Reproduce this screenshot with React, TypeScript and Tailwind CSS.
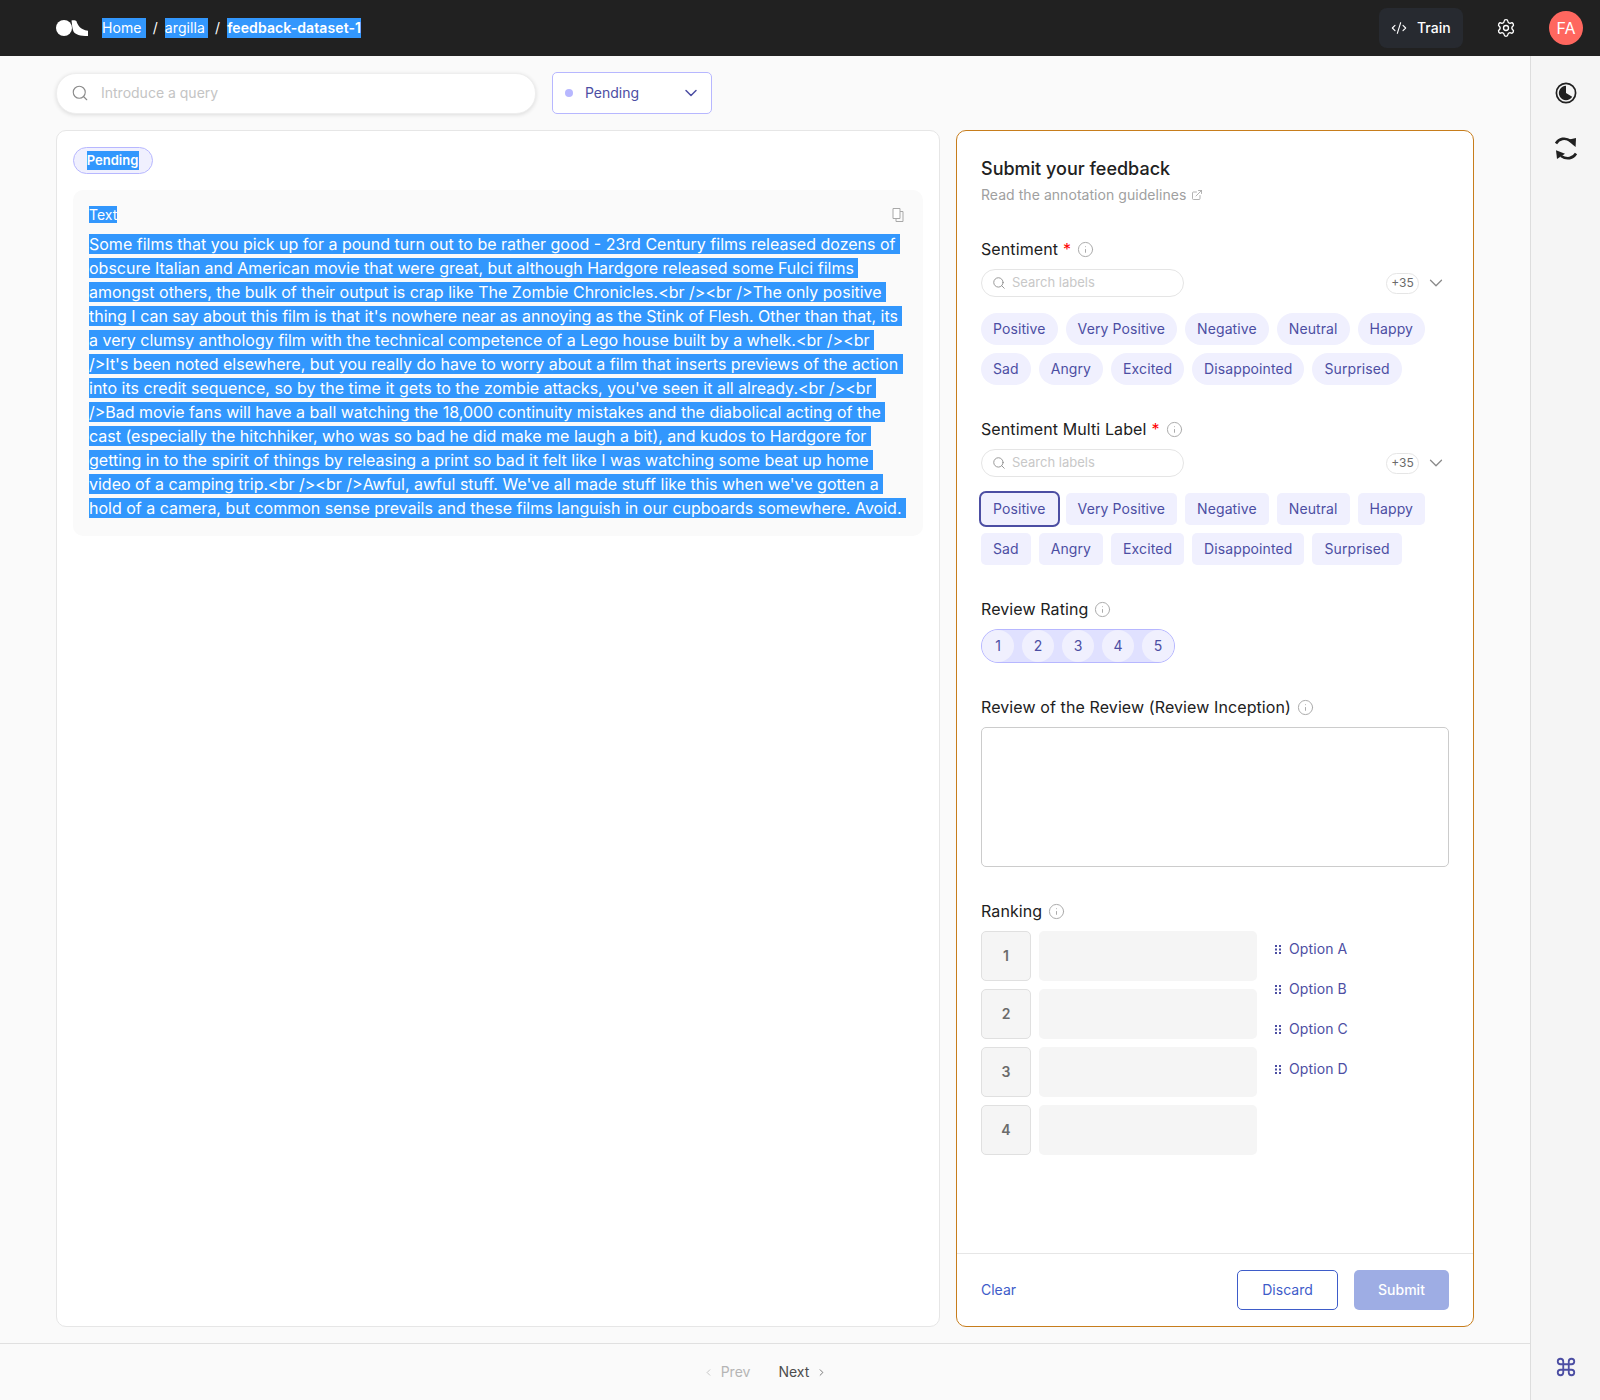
import { ChevronDown, ChevronLeft, ChevronRight, CodeXml, Command, ExternalLink, Info, Search, Settings } from "lucide-react";

const sel = "bg-[#3297fd] text-white";

const lines = [
  "Some films that you pick up for a pound turn out to be rather good - 23rd Century films released dozens of",
  "obscure Italian and American movie that were great, but although Hardgore released some Fulci films",
  "amongst others, the bulk of their output is crap like The Zombie Chronicles.<br /><br />The only positive",
  "thing I can say about this film is that it's nowhere near as annoying as the Stink of Flesh. Other than that, its",
  "a very clumsy anthology film with the technical competence of a Lego house built by a whelk.<br /><br",
  "/>It's been noted elsewhere, but you really do have to worry about a film that inserts previews of the action",
  "into its credit sequence, so by the time it gets to the zombie attacks, you've seen it all already.<br /><br",
  "/>Bad movie fans will have a ball watching the 18,000 continuity mistakes and the diabolical acting of the",
  "cast (especially the hitchhiker, who was so bad he did make me laugh a bit), and kudos to Hardgore for",
  "getting in to the spirit of things by releasing a print so bad it felt like I was watching some beat up home",
  "video of a camping trip.<br /><br />Awful, awful stuff. We've all made stuff like this when we've gotten a",
  "hold of a camera, but common sense prevails and these films languish in our cupboards somewhere. Avoid.",
];

const labels = ["Positive", "Very Positive", "Negative", "Neutral", "Happy", "Sad", "Angry", "Excited", "Disappointed", "Surprised"];

function Label({ text, required }: { text: string; required?: boolean }) {
  return (
    <div className="flex items-center h-6 text-base tracking-[0.1px] text-[#212121]">
      <span>{text}</span>
      {required && <span className="ml-[5px] text-[#ff0000] leading-none">*</span>}
      <Info size={17} strokeWidth={1.4} className="ml-[6px] text-[#aaaaaa]" />
    </div>
  );
}

function LabelSearch() {
  return (
    <div className="flex items-center justify-between h-7 mt-[8px] pr-[2px]">
      <div className="flex items-center w-[203px] h-7 border border-[#e5e5e5] rounded-full pl-[10px] text-[13px] text-[#c8c8c8]">
        <Search size={14} strokeWidth={1.5} className="text-[#8a8a8a] mr-[6px]" />
        Search labels
      </div>
      <div className="flex items-center gap-[6px]">
        <span className="flex items-center justify-center w-[33px] h-[21px] border border-[#e5e5e5] rounded-full text-[12px] text-[#6b6b6b]">+35</span>
        <ChevronDown size={22} strokeWidth={1.4} className="text-[#8a8a8a]" />
      </div>
    </div>
  );
}

function Chips({ square }: { square?: boolean }) {
  return (
    <div className="flex flex-wrap gap-[8px] mt-[16px] w-[468px]">
      {labels.map((l, i) => (
        <span
          key={l}
          className={`flex items-center h-8 px-3 text-sm tracking-[0.1px] text-[#4c4ea3] bg-[#f0f0fe] ${square ? "rounded-[5px]" : "rounded-full"} ${square && i === 0 ? "outline-2 outline-offset-0 outline-[#4c4ea3]" : ""}`}
        >
          {l}
        </span>
      ))}
    </div>
  );
}

function Logo() {
  return (
    <svg width="32" height="16" viewBox="0 0 32 16" fill="white">
      <ellipse cx="8" cy="8" rx="8" ry="8" />
      <path d="M15.5 0.5 C18 0.2 19.6 0.4 20.5 1.2 C21.6 4.8 24 9.6 32 10.8 L32 16 C24 16 19.5 14.8 17.5 11.5 C16.3 9 16 4 15.5 0.5 Z" />
    </svg>
  );
}

function ThemeIcon() {
  return (
    <svg width="22" height="22" viewBox="0 0 22 22">
      <circle cx="11" cy="11" r="9.6" fill="none" stroke="#212121" strokeWidth="1.7" />
      <path d="M11 3.8 A7.2 7.2 0 1 0 17.2 14.7 L11 11 Z" fill="#212121" />
    </svg>
  );
}

function RefreshIcon() {
  return (
    <svg width="32" height="32" viewBox="0 0 32 32" fill="#212121">
      <path d="M6 13.5 C9 8.5 15 7 21 11" fill="none" stroke="#212121" strokeWidth="2.6" />
      <path d="M17 10 L26 8 L25.6 17 Z" />
      <path d="M26 23.5 C23 28.5 17 30 11 26" fill="none" stroke="#212121" strokeWidth="2.6" />
      <path d="M15 23.8 L6 20.2 L7 29 Z" />
    </svg>
  );
}

function CopyIcon() {
  return (
    <svg width="12" height="14" viewBox="0 0 12 14" fill="none" stroke="#a8a8a8" strokeWidth="1">
      <path d="M1 0.5 H8 V10.5 H1 Z" fill="white" />
      <path d="M8 3.5 H11 V13.5 H4 V10.5" />
    </svg>
  );
}

function Grip() {
  return (
    <svg width="6" height="9" viewBox="0 0 6 9" fill="#4c4ea3" className="mr-[8px]">
      <rect x="0" y="0" width="2" height="2" />
      <rect x="4" y="0" width="2" height="2" />
      <rect x="0" y="3.5" width="2" height="2" />
      <rect x="4" y="3.5" width="2" height="2" />
      <rect x="0" y="7" width="2" height="2" />
      <rect x="4" y="7" width="2" height="2" />
    </svg>
  );
}

export default function App() {
  return (
    <div className="flex flex-col h-[1400px] bg-[#fafafa] text-[#212121]" style={{ fontFamily: "Inter, 'Liberation Sans', sans-serif" }}>
      {/* top bar */}
      <header className="flex items-center h-14 flex-none bg-[#212121] pl-14 pr-[17px]">
        <Logo />
        <nav className="flex items-center ml-[14px] text-sm tracking-[0.1px] text-white">
          <span className={`${sel} pr-[4px]`}>Home</span>
          <span className="mx-[7px]">/</span>
          <span className={`${sel} pr-[3px]`}>argilla</span>
          <span className="mx-[7px]">/</span>
          <span className={`${sel} font-semibold`}>feedback-dataset-1</span>
        </nav>
        <div className="flex-1" />
        <button className="flex items-center h-10 w-[84px] pl-[12px] rounded-lg bg-[#272a30] text-sm font-medium text-white">
          <CodeXml size={16} strokeWidth={1.7} className="mr-[10px]" />
          Train
        </button>
        <Settings size={20} strokeWidth={1.6} className="ml-[33px] text-white" />
        <div className="flex items-center justify-center w-[34px] h-[34px] ml-[33px] rounded-full bg-[#ff675f] text-base text-white">FA</div>
      </header>

      <div className="flex flex-1 min-h-0">
        {/* main */}
        <div className="flex flex-col flex-1 min-w-0">
          <div className="flex flex-col flex-1 min-h-0 pt-4 pl-14 pr-[56px] pb-4">
            <div className="flex items-center gap-4 flex-none">
              <div className="flex items-center w-[480px] h-[41px] bg-white rounded-[20px] border border-[#eeeeee] shadow-[0_1px_4px_rgba(0,0,0,0.12)] pl-[14px] text-sm text-[#c4c4c4]">
                <Search size={18} strokeWidth={1.5} className="text-[#8a8a8a] mr-[12px]" />
                Introduce a query
              </div>
              <div className="flex items-center w-[160px] h-[42px] bg-white rounded-[5px] border border-[#b7b7ff] pl-[12px] pr-[10px] text-sm text-[#4c4ea3]">
                <span className="w-2 h-2 rounded-full bg-[#b7b7ff] mr-[12px]" />
                Pending
                <ChevronDown size={20} strokeWidth={1.8} className="ml-auto" />
              </div>
            </div>

            <div className="flex flex-1 min-h-0 gap-4 mt-4">
              {/* record */}
              <section className="w-[884px] flex-none bg-white border border-[#e6e6e6] rounded-[10px] pt-4 px-4">
                <div className="flex items-center justify-center w-[80px] h-[27px] rounded-full bg-[#f0f0fe] border border-[#b7b7ff]">
                  <span className={`${sel} text-[13px] font-semibold pr-[1px]`}>Pending</span>
                </div>
                <div className="relative mt-[16px] bg-[#fafafa] rounded-[10px] px-4 pt-[16px] pb-[16px] h-[346px]">
                  <div className="text-sm leading-[18px]"><span className={sel}>Text</span></div>
                  <div className="absolute top-[18px] right-[19px]"><CopyIcon /></div>
                  <div className="mt-[8px] text-base leading-6 whitespace-nowrap">
                    {lines.map((l) => (
                      <div key={l}><span className={sel}>{l}{"\u00a0"}</span></div>
                    ))}
                  </div>
                </div>
              </section>

              {/* form */}
              <section className="flex flex-col w-[518px] flex-none bg-white border border-[#c77d1c] rounded-[10px]">
                <div className="flex-1 min-h-0 pt-[26px] pl-[24px] pr-[24px]">
                  <h2 className="text-lg leading-6 font-medium">Submit your feedback</h2>
                  <div className="flex items-center mt-[4px] h-5 text-sm tracking-[0.05px] text-[#a0a0a0]">
                    Read the annotation guidelines
                    <ExternalLink size={12} strokeWidth={1.6} className="ml-[5px]" />
                  </div>

                  <div className="mt-[32px]">
                    <Label text="Sentiment" required />
                    <LabelSearch />
                    <Chips />
                  </div>

                  <div className="mt-[32px]">
                    <Label text="Sentiment Multi Label" required />
                    <LabelSearch />
                    <Chips square />
                  </div>

                  <div className="mt-[32px]">
                    <Label text="Review Rating" />
                    <div className="flex items-center gap-[8px] w-[194px] h-[34px] mt-[8px] bg-[#e0e1ff] border border-[#b7b7ff] rounded-full">
                      {[1, 2, 3, 4, 5].map((n) => (
                        <span key={n} className="flex items-center justify-center w-[32px] h-[32px] rounded-full bg-[#f0f0fe] text-sm text-[#4c4ea3]">{n}</span>
                      ))}
                    </div>
                  </div>

                  <div className="mt-[32px]">
                    <Label text="Review of the Review (Review Inception)" />
                    <div className="w-[468px] h-[140px] mt-[8px] border border-[#cccccc] rounded-[5px]" />
                  </div>

                  <div className="mt-[32px]">
                    <Label text="Ranking" />
                    <div className="flex mt-[8px]">
                      <div className="flex flex-col gap-[8px]">
                        {[1, 2, 3, 4].map((n) => (
                          <div key={n} className="flex gap-[8px]">
                            <span className="flex items-center justify-center w-[50px] h-[50px] bg-[#f5f5f5] border border-[#e0e0e0] rounded-[5px] text-sm font-semibold text-[#6b6b6b]">{n}</span>
                            <span className="w-[218px] h-[50px] bg-[#f5f5f5] rounded-[5px]" />
                          </div>
                        ))}
                      </div>
                      <div className="flex flex-col gap-[16px] ml-[18px] pt-[6px]">
                        {["Option A", "Option B", "Option C", "Option D"].map((o) => (
                          <div key={o} className="flex items-center h-6 text-sm tracking-[0.1px] text-[#4c4ea3]">
                            <Grip />
                            {o}
                          </div>
                        ))}
                      </div>
                    </div>
                  </div>
                </div>

                <footer className="flex items-center flex-none h-[73px] border-t border-[#e6e6e6] px-[24px] text-sm">
                  <span className="text-[#3e5cc9]">Clear</span>
                  <span className="flex items-center justify-center w-[101px] h-10 ml-auto bg-white border border-[#3e5cc9] rounded-[5px] text-[#3e5cc9]">Discard</span>
                  <span className="flex items-center justify-center w-[95px] h-10 ml-4 bg-[#9eade4] rounded-[5px] font-medium text-white">Submit</span>
                </footer>
              </section>
            </div>
          </div>

          {/* pagination */}
          <div className="flex items-center justify-center flex-none h-[57px] border-t border-[#e0e0e0] text-sm">
            <span className="flex items-center text-[#b5b5b5]">
              <ChevronLeft size={11} strokeWidth={1.6} className="mr-[7px]" />
              Prev
            </span>
            <span className="flex items-center ml-[28px] text-[#4d4d4d]">
              Next
              <ChevronRight size={11} strokeWidth={1.6} className="ml-[7px]" />
            </span>
          </div>
        </div>

        {/* right rail */}
        <aside className="flex flex-col items-center w-[70px] flex-none bg-[#f5f5f5] border-l border-[#dddddd] pt-[26px] pb-[22px]">
          <ThemeIcon />
          <div className="mt-[26px]"><RefreshIcon /></div>
          <Command size={22} strokeWidth={2} className="mt-auto text-[#4c4ea3]" />
        </aside>
      </div>
    </div>
  );
}
